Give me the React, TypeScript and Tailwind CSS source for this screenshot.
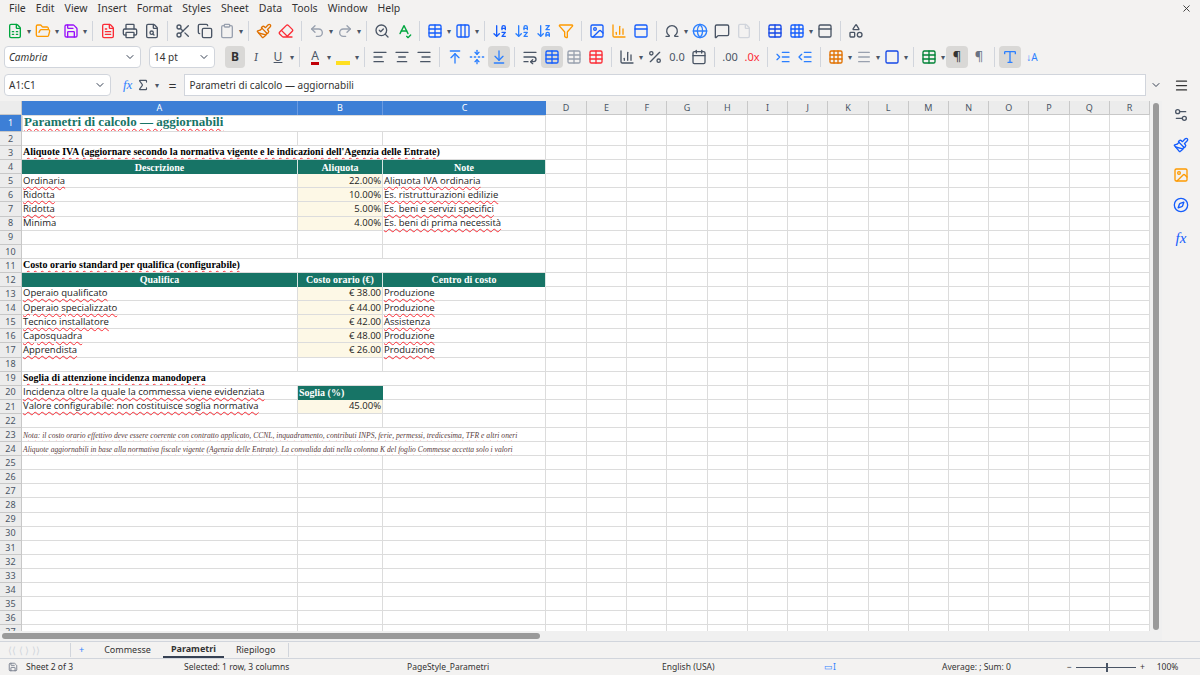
import React from 'react';
import {
  FileSpreadsheet, FolderOpen, FileText, Printer, FileSearch, Scissors, Copy, Clipboard,
  Paintbrush, Eraser, Undo2, Redo2, SearchCheck, SpellCheck, Table, Columns3, ArrowDownAZ,
  ArrowDownZA, Filter, Image, BarChart3, Omega, Globe, MessageSquare, File, PanelTop,
  Shapes, ChevronDown, AlignLeft, AlignCenter, AlignRight, ArrowUpToLine, FoldVertical,
  ArrowDownToLine, WrapText, Grid3x3, Percent, Calendar, IndentIncrease, IndentDecrease,
  Square, Menu, Settings2, Type, Compass, X, Sigma, Save as SaveIcon,
} from 'lucide-react';

const ui = { fontFamily: '"Noto Sans", "Open Sans", sans-serif' };
const serif = { fontFamily: '"Liberation Serif", "DejaVu Serif", serif' };
const body = { fontFamily: '"Open Sans", "Noto Sans", sans-serif' };

const wavy = 'underline decoration-wavy decoration-red-500 decoration-1 underline-offset-2';

const Dd = () => <span className="text-[8px] text-gray-600 mx-[1px]">▾</span>;

const Ic = ({ children }: { children: React.ReactNode }) => (
  <div className="flex items-center justify-center w-[22px] h-[22px] text-gray-600">{children}</div>
);

const Sep = () => <div className="w-px h-[20px] bg-gray-300 mx-1" />;

type Cell = { a?: string; b?: string; c?: string; kind?: string };

const rows: Record<number, Cell> = {
  1: { kind: 'title', a: 'Parametri di calcolo — aggiornabili' },
  3: { kind: 'section', a: "Aliquote IVA (aggiornare secondo la normativa vigente e le indicazioni dell'Agenzia delle Entrate)" },
  4: { kind: 'head', a: 'Descrizione', b: 'Aliquota', c: 'Note' },
  5: { a: 'Ordinaria', b: '22.00%', c: 'Aliquota IVA ordinaria' },
  6: { a: 'Ridotta', b: '10.00%', c: 'Es. ristrutturazioni edilizie' },
  7: { a: 'Ridotta', b: '5.00%', c: 'Es. beni e servizi specifici' },
  8: { a: 'Minima', b: '4.00%', c: 'Es. beni di prima necessità' },
  11: { kind: 'section', a: 'Costo orario standard per qualifica (configurabile)' },
  12: { kind: 'head', a: 'Qualifica', b: 'Costo orario (€)', c: 'Centro di costo' },
  13: { a: 'Operaio qualificato', b: '€ 38.00', c: 'Produzione' },
  14: { a: 'Operaio specializzato', b: '€ 44.00', c: 'Produzione' },
  15: { a: 'Tecnico installatore', b: '€ 42.00', c: 'Assistenza' },
  16: { a: 'Caposquadra', b: '€ 48.00', c: 'Produzione' },
  17: { a: 'Apprendista', b: '€ 26.00', c: 'Produzione' },
  19: { kind: 'section', a: 'Soglia di attenzione incidenza manodopera' },
  20: { kind: 'soglia', a: 'Incidenza oltre la quale la commessa viene evidenziata', b: 'Soglia (%)' },
  21: { a: 'Valore configurabile: non costituisce soglia normativa', b: '45.00%' },
  23: { kind: 'note', a: 'Nota: il costo orario effettivo deve essere coerente con contratto applicato, CCNL, inquadramento, contributi INPS, ferie, permessi, tredicesima, TFR e altri oneri' },
  24: { kind: 'note', a: 'Aliquote aggiornabili in base alla normativa fiscale vigente (Agenzia delle Entrate). La convalida dati nella colonna K del foglio Commesse accetta solo i valori' },
};

const extraCols = ['E', 'F', 'G', 'H', 'I', 'J', 'K', 'L', 'M', 'N', 'O', 'P', 'Q', 'R'];

function RowView({ n }: { n: number }) {
  const r = rows[n] || {};
  const h = n === 1 ? 'h-[17px]' : 'h-[14.1px]';
  const border = 'border-r border-b border-[#dcdcdc]';
  const yellowB = n >= 5 && n <= 8 || n >= 13 && n <= 17 || n === 21;
  const rest = (
    <>
      <div className={`w-[41px] shrink-0 ${border}`} />
      {extraCols.map(c => <div key={c} className={`flex-1 ${border}`} />)}
    </>
  );
  const hdr = (
    <div className={`w-[22px] shrink-0 flex items-center justify-center text-[9px] border-r border-b border-[#c8c8c8] ${n === 1 ? 'bg-[#3d7fd6] text-white' : 'bg-[#ececec] text-gray-600'}`} style={ui}>{n}</div>
  );
  if (r.kind === 'title' || r.kind === 'section' || r.kind === 'note') {
    const cls = r.kind === 'title'
      ? 'text-[13px] font-bold text-[#177466] border border-[#3d7fd6]'
      : r.kind === 'section' ? 'text-[10px] font-bold text-black' : 'text-[7.6px] italic text-[#5a4040]';
    return (
      <div className={`flex ${h}`}>
        {hdr}
        <div className={`w-[524px] shrink-0 flex items-end px-[1px] overflow-hidden whitespace-nowrap ${border} ${cls}`} style={serif}>
          <span className={wavy}>{r.a}</span>
        </div>
        {rest}
      </div>
    );
  }
  if (r.kind === 'head') {
    const th = 'bg-[#177466] text-white text-[10px] font-bold flex items-center justify-center whitespace-nowrap border-r border-[#d9e6e3]';
    return (
      <div className={`flex ${h}`}>
        {hdr}
        <div className={`w-[276px] shrink-0 ${th}`} style={serif}>{r.a}</div>
        <div className={`w-[85px] shrink-0 ${th}`} style={serif}>{r.b}</div>
        <div className={`w-[163px] shrink-0 ${th}`} style={serif}>{r.c}</div>
        {rest}
      </div>
    );
  }
  return (
    <div className={`flex ${h} text-[9.5px] text-[#222]`} style={body}>
      {hdr}
      <div className={`w-[276px] shrink-0 flex items-center px-[1px] whitespace-nowrap ${border}`}>
        {r.a && <span className={r.a === 'Minima' ? '' : wavy}>{r.a}</span>}
      </div>
      {r.kind === 'soglia' ? (
        <div className="w-[85px] shrink-0 bg-[#177466] text-white text-[10px] font-bold flex items-center px-[1px]" style={serif}>{r.b}</div>
      ) : (
        <div className={`w-[85px] shrink-0 flex items-center justify-end px-[1px] ${border} ${yellowB ? 'bg-[#fdf8e6]' : ''}`}>{r.b}</div>
      )}
      <div className={`w-[163px] shrink-0 flex items-center px-[1px] whitespace-nowrap ${border}`}>
        {r.c && <span className={wavy}>{r.c}</span>}
      </div>
      {rest}
    </div>
  );
}

export default function App() {
  const menus = ['File', 'Edit', 'View', 'Insert', 'Format', 'Styles', 'Sheet', 'Data', 'Tools', 'Window', 'Help'];
  const nums = Array.from({ length: 37 }, (_, i) => i + 1);
  const s = 16;
  return (
    <div className="w-[1200px] h-[675px] bg-[#f3f2f1] overflow-hidden flex flex-col text-[#333]" style={ui}>
      <div className="h-[17px] flex items-center px-1 text-[10.5px] text-[#333]">
        {menus.map(m => <span key={m} className="px-[5px]">{m}</span>)}
        <div className="flex-1" />
        <X size={11} className="mr-1" />
      </div>
      <div className="h-[26px] flex items-center px-1 mt-[1px]">
        <Ic><FileSpreadsheet size={s} className="text-green-600" /></Ic><Dd />
        <Ic><FolderOpen size={s} className="text-amber-500" /></Ic><Dd />
        <Ic><SaveIcon size={s} className="text-purple-600" /></Ic><Dd />
        <Sep />
        <Ic><FileText size={s} className="text-red-500" /></Ic>
        <Ic><Printer size={s} /></Ic>
        <Ic><FileSearch size={s} /></Ic>
        <Sep />
        <Ic><Scissors size={s} /></Ic>
        <Ic><Copy size={s} /></Ic>
        <Ic><Clipboard size={s} className="text-gray-400" /></Ic><Dd />
        <Sep />
        <Ic><Paintbrush size={s} className="text-amber-600" /></Ic>
        <Ic><Eraser size={s} className="text-red-500" /></Ic>
        <Sep />
        <Ic><Undo2 size={s} className="text-gray-400" /></Ic><Dd />
        <Ic><Redo2 size={s} className="text-gray-400" /></Ic><Dd />
        <Sep />
        <Ic><SearchCheck size={s} /></Ic>
        <Ic><SpellCheck size={s} className="text-green-600" /></Ic>
        <Sep />
        <Ic><Table size={s} className="text-blue-600" /></Ic><Dd />
        <Ic><Columns3 size={s} className="text-blue-600" /></Ic><Dd />
        <Sep />
        <Ic><ArrowDownAZ size={s} className="text-blue-600" /></Ic>
        <Ic><ArrowDownAZ size={s} className="text-blue-500" /></Ic>
        <Ic><ArrowDownZA size={s} className="text-blue-500" /></Ic>
        <Ic><Filter size={s} className="text-amber-500" /></Ic>
        <Sep />
        <Ic><Image size={s} className="text-blue-600" /></Ic>
        <Ic><BarChart3 size={s} className="text-amber-500" /></Ic>
        <Ic><PanelTop size={s} className="text-blue-600" /></Ic>
        <Sep />
        <Ic><Omega size={s} /></Ic><Dd />
        <Ic><Globe size={s} className="text-blue-500" /></Ic>
        <Ic><MessageSquare size={s} /></Ic>
        <Ic><File size={s} className="text-gray-300" /></Ic>
        <Sep />
        <Ic><Table size={s} className="text-blue-700" /></Ic>
        <Ic><Grid3x3 size={s} className="text-blue-600" /></Ic><Dd />
        <Ic><PanelTop size={s} /></Ic>
        <Sep />
        <Ic><Shapes size={s} /></Ic>
      </div>
      <div className="h-[28px] flex items-center px-1 mt-[-1px]">
        <div className="w-[137px] h-[22px] bg-white border border-gray-300 rounded flex items-center">
          <span className="flex-1 px-1 text-[10px] italic">Cambria</span>
          <ChevronDown size={12} className="mx-1 text-gray-700" />
        </div>
        <div className="w-[66px] h-[22px] ml-[8px] bg-white border border-gray-300 rounded flex items-center">
          <span className="flex-1 px-1 text-[10px]">14 pt</span>
          <ChevronDown size={12} className="mx-1 text-gray-700" />
        </div>
        <div className="ml-[10px] w-[20px] h-[22px] bg-[#d9d8d6] rounded flex items-center justify-center font-bold text-[12px]">B</div>
        <Ic><span className="italic text-[12px] font-serif">I</span></Ic>
        <Ic><span className="underline text-[12px]">U</span></Ic><Dd />
        <Sep />
        <Ic><span className="text-[12px] border-b-[3px] border-red-700 leading-[12px]">A</span></Ic><Dd />
        <Ic><span className="w-[14px] h-[4px] bg-yellow-300 mt-[12px]" /></Ic><Dd />
        <Sep />
        <Ic><AlignLeft size={s} /></Ic>
        <Ic><AlignCenter size={s} /></Ic>
        <Ic><AlignRight size={s} /></Ic>
        <Sep />
        <Ic><ArrowUpToLine size={s} className="text-blue-500" /></Ic>
        <Ic><FoldVertical size={s} className="text-blue-500" /></Ic>
        <div className="w-[22px] h-[22px] bg-[#d9d8d6] rounded flex items-center justify-center"><ArrowDownToLine size={s} className="text-blue-500" /></div>
        <Sep />
        <Ic><WrapText size={s} /></Ic>
        <div className="w-[22px] h-[22px] bg-[#d9d8d6] rounded flex items-center justify-center"><Table size={s} className="text-blue-600" /></div>
        <Ic><Table size={s} className="text-gray-400" /></Ic>
        <Ic><Table size={s} className="text-red-500" /></Ic>
        <Sep />
        <Ic><BarChart3 size={s} /></Ic><Dd />
        <Ic><Percent size={s} /></Ic>
        <Ic><span className="text-[11px]">0.0</span></Ic>
        <Ic><Calendar size={s} /></Ic>
        <Sep />
        <Ic><span className="text-[11px]">.00</span></Ic>
        <Ic><span className="text-[11px] text-red-500">.0x</span></Ic>
        <Sep />
        <Ic><IndentIncrease size={s} className="text-blue-500" /></Ic>
        <Ic><IndentDecrease size={s} className="text-blue-500" /></Ic>
        <Sep />
        <Ic><Grid3x3 size={s} className="text-amber-600" /></Ic><Dd />
        <Ic><Menu size={s} className="text-gray-400" /></Ic><Dd />
        <Ic><Square size={s} className="text-blue-700" /></Ic><Dd />
        <Sep />
        <Ic><Table size={s} className="text-green-700" /></Ic><Dd />
        <div className="w-[22px] h-[22px] bg-[#d9d8d6] rounded flex items-center justify-center text-[13px]">¶</div>
        <Ic><span className="text-[13px] text-gray-500">¶</span></Ic>
        <Sep />
        <div className="w-[22px] h-[22px] bg-[#d9d8d6] rounded flex items-center justify-center"><Type size={s} className="text-blue-500" /></div>
        <Ic><span className="text-[10px] text-blue-500">↓A</span></Ic>
      </div>
      <div className="h-[26px] flex items-center px-1 mt-[1px] gap-1">
        <div className="w-[107px] h-[22px] bg-white border border-gray-300 rounded flex items-center">
          <span className="flex-1 px-1 text-[10px]">A1:C1</span>
          <ChevronDown size={12} className="mx-1 text-gray-700" />
        </div>
        <span className="ml-2 italic text-blue-500 text-[13px]" style={serif}>fx</span>
        <Sigma size={14} className="text-gray-600" /><Dd />
        <span className="text-[14px] mx-1">=</span>
        <div className="flex-1 h-[22px] bg-white border border-gray-300 flex items-center px-1 text-[10px]">Parametri di calcolo — aggiornabili</div>
        <ChevronDown size={12} className="text-gray-700" />
        <div className="w-[30px] flex justify-center"><Menu size={15} /></div>
      </div>
      <div className="flex flex-1 mt-[3px] min-h-0">
        <div className="w-[1162px] flex flex-col bg-white">
          <div className="flex flex-1 min-h-0">
            <div className="flex-1 flex flex-col overflow-hidden">
              <div className="flex h-[14px] shrink-0 text-[9px]">
                <div className="w-[22px] shrink-0 bg-[#ececec] border-r border-b border-[#c8c8c8]" />
                <div className="w-[276px] shrink-0 bg-[#3d7fd6] text-white flex items-center justify-center border-r border-[#6b9be0]">A</div>
                <div className="w-[85px] shrink-0 bg-[#3d7fd6] text-white flex items-center justify-center border-r border-[#6b9be0]">B</div>
                <div className="w-[163px] shrink-0 bg-[#3d7fd6] text-white flex items-center justify-center">C</div>
                {['D', ...extraCols].map((c, i) => (
                  <div key={c} className={`${i === 0 ? 'w-[41px] shrink-0' : 'flex-1'} bg-[#ececec] text-gray-600 flex items-center justify-center border-r border-b border-[#c8c8c8]`}>{c}</div>
                ))}
              </div>
              {nums.map(n => <RowView key={n} n={n} />)}
            </div>
            <div className="w-[12px] bg-[#f0f0f0] flex justify-center pt-[2px]">
              <div className="w-[6px] h-[527px] bg-[#9a9a9a] rounded" />
            </div>
          </div>
          <div className="h-[10px] bg-[#f0f0f0] flex items-center px-[2px]">
            <div className="w-[538px] h-[6px] bg-[#9a9a9a] rounded" />
          </div>
        </div>
        <div className="w-[38px] flex flex-col items-center gap-[14px] pt-[6px] text-gray-600">
          <Settings2 size={16} />
          <Paintbrush size={16} className="text-blue-600" />
          <Image size={16} className="text-amber-500" />
          <Compass size={16} className="text-blue-600" />
          <span className="italic text-blue-600 text-[15px]" style={serif}>fx</span>
        </div>
      </div>
      <div className="h-[17px] flex items-center text-[9px] text-[#333] border-t border-gray-300">
        <span className="w-[70px] px-2 text-gray-300 text-[10px]">⟨⟨ ⟨ ⟩ ⟩⟩</span>
        <span className="px-2 text-blue-500 border-l border-gray-300">+</span>
        <span className="px-3">Commesse</span>
        <span className="px-2 font-bold border-b-2 border-gray-700 h-full flex items-center">Parametri</span>
        <span className="px-3 border-r border-gray-300">Riepilogo</span>
      </div>
      <div className="h-[17px] flex items-center text-[8.5px] text-[#333] border-t border-gray-300">
        <SaveIcon size={10} className="mx-2 text-gray-500" />
        <span className="w-[158px]">Sheet 2 of 3</span>
        <span className="w-[223px]">Selected: 1 row, 3 columns</span>
        <span className="w-[255px]">PageStyle_Parametri</span>
        <span className="w-[162px]">English (USA)</span>
        <span className="w-[118px] text-blue-500">▭I</span>
        <span className="w-[125px]">Average: ; Sum: 0</span>
        <span className="flex items-center gap-1">− <span className="w-[60px] h-px bg-gray-600 relative"><span className="absolute left-[30px] -top-[4px] w-[2px] h-[9px] bg-gray-600" /></span> +</span>
        <span className="ml-3">100%</span>
      </div>
    </div>
  );
}
